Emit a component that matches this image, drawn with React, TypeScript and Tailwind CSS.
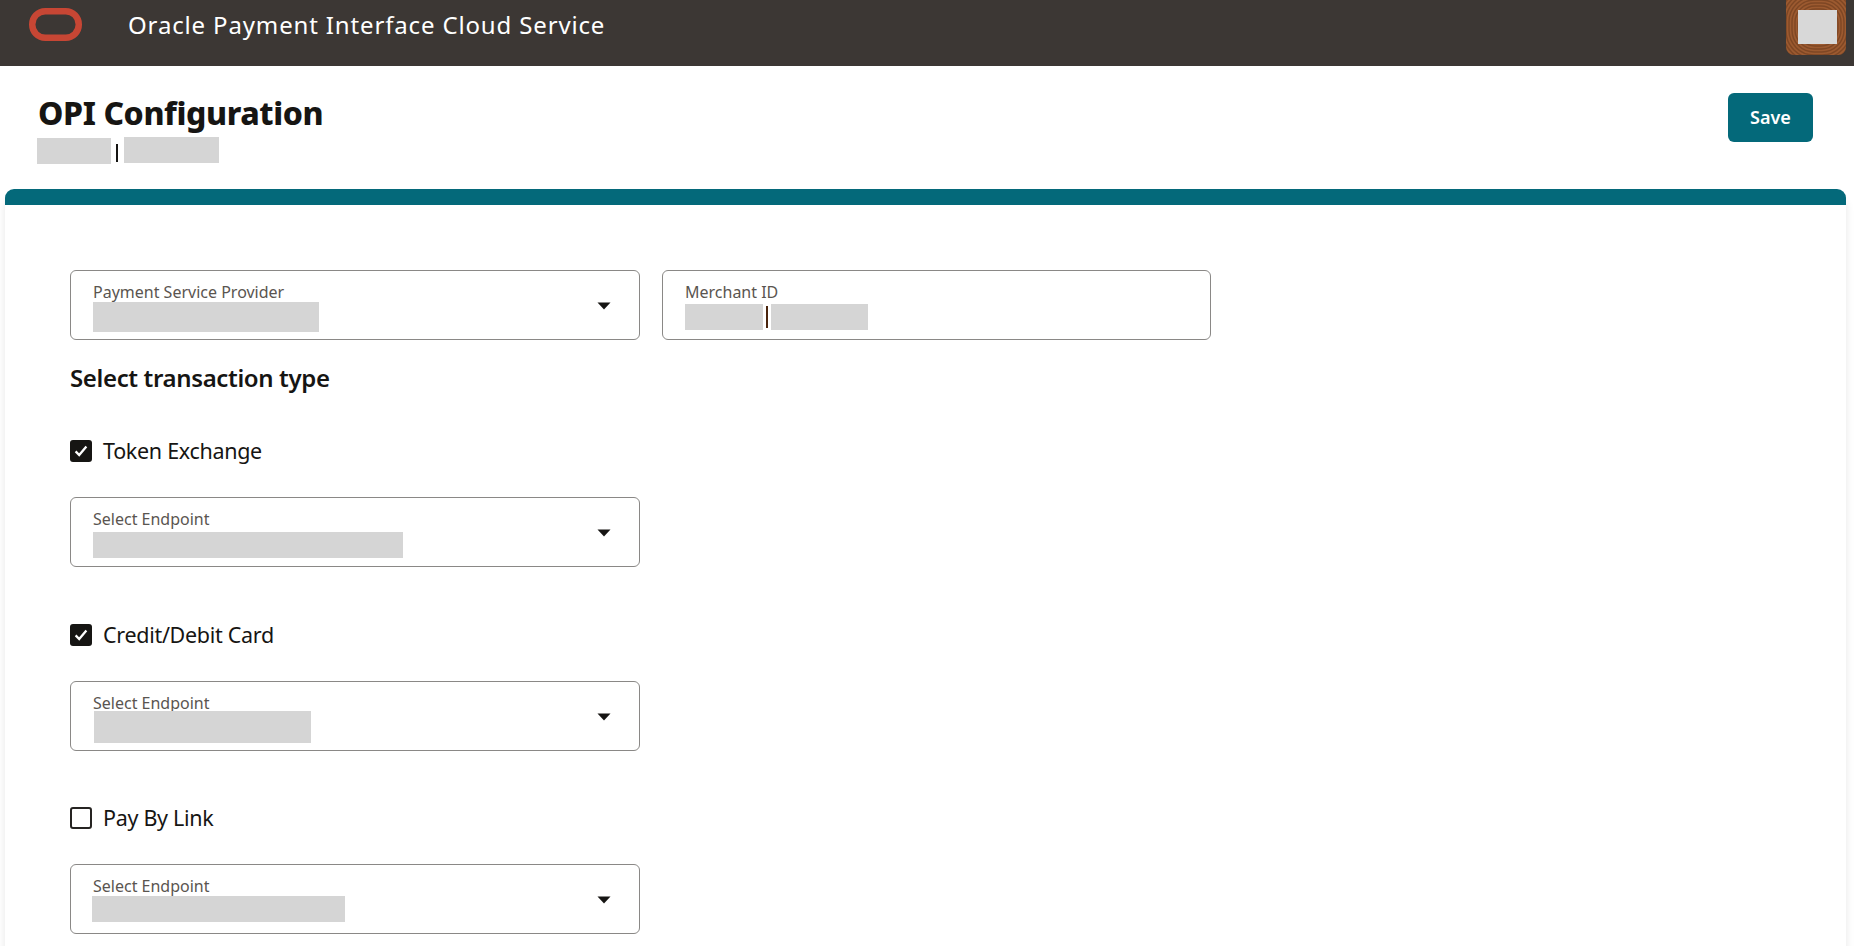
const font = "font-['Noto_Sans',sans-serif]";

function Caret() {
  return (
    <svg width="14" height="8" viewBox="0 0 14 8" className="shrink-0">
      <path d="M0.5 0.5H13.5L7 7.5Z" fill="#161513" />
    </svg>
  );
}

function Block({ className }: { className: string }) {
  return <div className={"bg-[#d5d5d5] " + className} />;
}

function Field({ label, children, caret = true, className }: { label: string; children: React.ReactNode; caret?: boolean; className: string }) {
  return (
    <div className={"flex h-[70px] items-start justify-between rounded-[6px] border border-[#8a8886] bg-white pl-[22px] pr-[28px] " + className}>
      <div className="flex flex-col pt-[11px]">
        <div className="h-[20px] text-[16px] leading-[20px] text-[#5a5550]">{label}</div>
        {children}
      </div>
      {caret && (
        <div className="pt-[31px]">
          <Caret />
        </div>
      )}
    </div>
  );
}

function Check({ label, checked }: { label: string; checked: boolean }) {
  return (
    <div className="flex h-[22px] items-center gap-[11px]">
      {checked ? (
        <div className="flex h-[22px] w-[22px] items-center justify-center rounded-[3px] bg-[#161513]">
          <svg width="14" height="14" viewBox="0 0 14 14">
            <path d="M1.6 7.4L5.2 11L12.4 2.6" fill="none" stroke="#ffffff" strokeWidth="2.3" />
          </svg>
        </div>
      ) : (
        <div className="h-[22px] w-[22px] rounded-[3px] border-2 border-[#262422] bg-white" />
      )}
      <span className="text-[21.5px] leading-[28px] tracking-[-0.3px] text-[#161513]">{label}</span>
    </div>
  );
}

function Avatar() {
  const rings = Array.from({ length: 22 }, (_, i) => 2 + i * 3);
  return (
    <svg width="60" height="55" viewBox="0 0 60 55" className="block">
      <defs>
        <clipPath id="av">
          <path d="M0 0H60V47A8 8 0 0 1 52 55H8A8 8 0 0 1 0 47Z" />
        </clipPath>
      </defs>
      <g clipPath="url(#av)">
        <rect width="60" height="55" fill="#9c5a30" />
        {rings.map((r) => (
          <rect key={r} x={32 - r} y={26 - r} width={r * 2} height={r * 2} rx={r * 0.85} fill="none" stroke="#723f20" strokeWidth="1.4" opacity="0.7" />
        ))}
      </g>
      <rect x="12" y="10" width="39" height="34" fill="#d8d8d8" />
    </svg>
  );
}

export default function App() {
  return (
    <div className={"min-h-[946px] overflow-hidden bg-white " + font}>
      <header className="flex h-[66px] items-start justify-between bg-[#3c3734] pr-[8px]">
        <div className="flex h-[49px] items-center">
          <svg width="53" height="33" viewBox="0 0 53 33" className="ml-[29px]">
            <rect x="3.25" y="3.25" width="46.5" height="26.5" rx="13" fill="none" stroke="#c74634" strokeWidth="6.5" />
          </svg>
          <div className="ml-[46px] text-[24px] leading-[32px] tracking-[0.85px] text-white">Oracle Payment Interface Cloud Service</div>
        </div>
        <Avatar />
      </header>

      <div className="flex h-[123px] items-start justify-between pl-[37px] pr-[41px]">
        <div>
          <h1 className="ml-[1px] mt-[27px] text-[32px] font-extrabold leading-[40px] tracking-[-0.4px] text-[#161513]">OPI Configuration</h1>
          <div className="mt-[3px] flex items-start">
            <Block className="mt-[2px] h-[26px] w-[74px]" />
            <div className="ml-[5px] mt-[8px] h-[18px] w-[2px] bg-[#161513]" />
            <Block className="ml-[6px] mt-[1px] h-[26px] w-[95px]" />
          </div>
        </div>
        <button className="mt-[27px] h-[49px] w-[85px] rounded-[6px] bg-[#04697a] text-[18px] font-semibold text-white">Save</button>
      </div>

      <main className="ml-[5px] mr-[8px] rounded-t-[9px] bg-white shadow-[0_10px_8px_rgba(0,0,0,0.1)]">
        <div className="h-[16px] rounded-t-[9px] bg-[#04697a]" />
        <div className="pb-[12px] pl-[65px] pt-[65px]">
          <div className="flex gap-[22px]">
            <Field label="Payment Service Provider" className="w-[570px]">
              <Block className="mt-0 h-[30px] w-[226px]" />
            </Field>
            <Field label="Merchant ID" caret={false} className="w-[549px]">
              <div className="mt-[2px] flex items-start">
                <Block className="h-[26px] w-[78px]" />
                <div className="ml-[3px] mt-[2px] h-[22px] w-[2px] bg-[#4a240d]" />
                <Block className="ml-[3px] h-[26px] w-[97px]" />
              </div>
            </Field>
          </div>

          <h2 className="mt-[22px] text-[24px] font-semibold leading-[32px] tracking-[-0.36px] text-[#161513]">Select transaction type</h2>

          <div className="mt-[46px]">
            <Check label="Token Exchange" checked />
          </div>
          <Field label="Select Endpoint" className="mt-[35px] w-[570px]">
            <Block className="mt-[3px] h-[26px] w-[310px]" />
          </Field>

          <div className="mt-[57px]">
            <Check label="Credit/Debit Card" checked />
          </div>
          <Field label="Select Endpoint" className="mt-[35px] w-[570px]">
            <Block className="ml-[1px] -mt-[2px] h-[32px] w-[217px]" />
          </Field>

          <div className="mt-[56px]">
            <Check label="Pay By Link" checked={false} />
          </div>
          <Field label="Select Endpoint" className="mt-[35px] w-[570px]">
            <Block className="-ml-[1px] mt-0 h-[26px] w-[253px]" />
          </Field>
        </div>
      </main>
    </div>
  );
}
